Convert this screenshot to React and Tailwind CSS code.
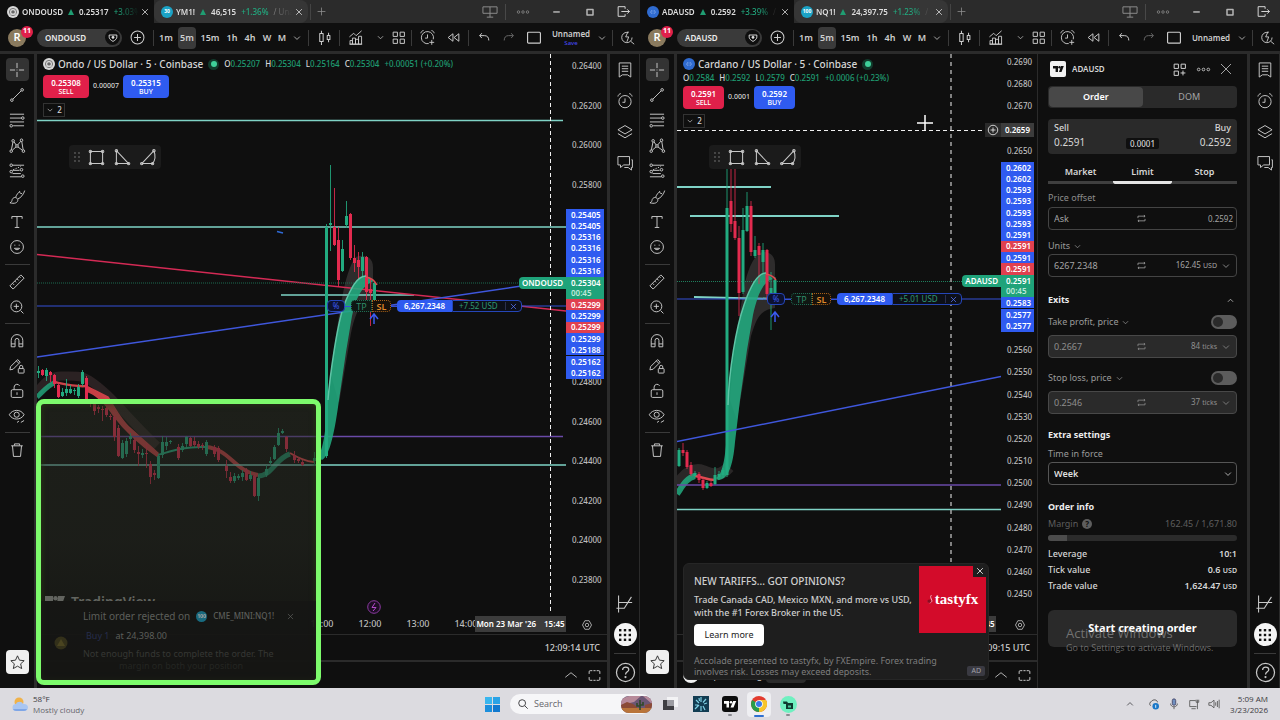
import React from "react";

/* ---------- icons, drawn on a 28 unit grid ---------- */
const ICONS = {
  cross: <path d="M14 3v8M14 17v8M3 14h8M17 14h8M14 13.4v1.2" />,
  line: <><circle cx="6" cy="22" r="2" /><circle cx="22" cy="6" r="2" /><path d="M7.5 20.500 20.500 7.500" /></>,
  fib: <><path d="M3 5h22M3 11h18M3 17h22M8 23h17" /><circle cx="23" cy="11" r="2" /><circle cx="5" cy="23" r="2" /></>,
  pattern: <><circle cx="5" cy="22" r="2" /><circle cx="8" cy="6" r="2" /><circle cx="14" cy="14" r="2" /><circle cx="21" cy="5" r="2" /><circle cx="24" cy="22" r="2" /><path d="M5.300 20 7.700 8M9.300 7.500l3.500 5M19.800 6.600l-4.700 5.800M21.400 7l2.200 13M6.500 20.700l6-5.300M15.500 15.500l7 5.200" /></>,
  forecast: <><path d="M7 5h18M7 13h11M7 18h13M3 23h18" /><path d="m8 12 12-5" strokeDasharray="2 2" /><circle cx="5" cy="5" r="2" /><circle cx="5" cy="15" r="2" /><circle cx="21" cy="12" r="2" /><circle cx="23" cy="22" r="2" /></>,
  brush: <path d="M3 23c3-1 3-3 3.500-5 1-3 5-4.500 7.500-2s1 6-2 7.200c-2.500 1-6 .6-9-.2zM12 14c1.500-4 4-6.500 6-8.500M15.500 17c4-1.500 9-7 10.500-13M18 5c0 3 1.500 4 4 3.500" />,
  text: <path d="M6 9V5.500h16V9M14 5.500v17M10.500 22.500h7" />,
  smile: <><circle cx="14" cy="14" r="10" /><path d="M10 16c1 3 7 3 8 0z" /><path d="M10.500 10.500v1M17.500 10.500v1" strokeWidth="2" /></>,
  ruler: <path d="m3 20 17-17 5 5L8 25zM7 16l2.500 2.500M10.500 12.500l2 2M14 9l2.500 2.500M17.500 5.500l2 2" />,
  zoom: <><circle cx="13" cy="13" r="8.500" /><path d="M13 9v8M9 13h8M19.500 19.500 24 24" /></>,
  magnet: <path d="M5 23V13a9 9 0 0 1 18 0v10h-6V13a3 3 0 0 0-6 0v10zM5 18.500h6M17 18.500h6" />,
  penlock: <><path d="m3 20 1-5L15 4l4 4L8 19zM13 6l4 4" /><rect x="16" y="18" width="9" height="7" rx="1" /><path d="M18 18v-2.500a2.500 2.500 0 0 1 5 0V18" /></>,
  lock: <><rect x="5" y="12" width="18" height="12" rx="2" /><path d="M9.500 12V8a4.500 4.500 0 0 1 8.500-2M14 16v4" /></>,
  eye: <><path d="M2 12c5-9 18-9 23 0-5 9-18 9-23 0z" /><circle cx="13.500" cy="12" r="4" /><path d="m14 24 3-2M20 24l5-3" /></>,
  trash: <path d="M5 7.500h18M10 7V4.500h8V7M7 7.500 8.500 24h11L21 7.500" />,
  star: <path d="m14 3 3.300 7.200 7.700.8-5.800 5.200 1.700 7.800-6.900-4-6.900 4 1.700-7.800L3 11l7.700-.8z" />,
  notes: <path d="M5 3h18v22l-5-3.500h-8L5 25zM9 8h10M9 12h10M9 16h10" />,
  alarm: <><circle cx="14" cy="15" r="9.500" /><path d="M14 10v6h-4M3 7c.5-2.500 2-4 4.500-4.500M25 7c-.5-2.500-2-4-4.500-4.500" /></>,
  layers: <path d="m14 4 11 6.500L14 17 3 10.500zM3 16.500 14 23l11-6.500" />,
  chat: <path d="M3 4h18v13h-9l-5 4v-4H3zM24 9h1.500v12H24v4l-5-4h-6" />,
  signal: <path d="M5 2v24M5 12h19M5 20h8L23 4M2 20h3" />,
  help: <><circle cx="14" cy="14" r="11" /><path d="M10.500 11c0-5 7.500-4.500 7.500-.5 0 2.500-4 3-4 6" /><circle cx="14" cy="19.500" r=".6" /></>,
  plusCircle: <><circle cx="14" cy="14" r="9.500" /><path d="M14 9v10M9 14h10" /></>,
  chevron: <path d="m6 10 8 8 8-8" strokeWidth="2.200" />,
  chevronUp: <path d="m6 18 8-8 8 8" strokeWidth="2.200" />,
  wideUp: <path d="m4 18 10-8 10 8" />,
  candles: <path d="M7 8h5v12H7zM9.500 4v4M9.500 20v5M18 11h4v6h-4zM20 7v4M20 17v4" />,
  indicators: <path d="M5 25v-6h4v6zM9 25V15h5v10zM14 25v-8h5v8zM19 25V12h5v13zM4 25h21M4 13l7-6 4 4 9-8" />,
  grid: <path d="M4 4h8v8H4zM17 4h8v8h-8zM4 17h8v8H4zM17 17h8v8h-8z" strokeWidth="1.800" />,
  gridPlus: <path d="M4 4h8v8H4zM17 4h8v8h-8zM4 17h8v8H4zM20.500 16v9M16 20.500h9" strokeWidth="1.800" />,
  alarmPlus: <><path d="M16 24a10 10 0 1 1 7.500-7M14 9v6h-4M3 7c.5-2.500 2-4 4.500-4.500M25 7c-.5-2.500-2-4-4.500-4.500M21 18v8M17 22h8" /></>,
  replay: <path d="M13 7v14l-9-7zM24 7v14l-9-7z" strokeWidth="1.800" />,
  undo: <path d="M9 6 5 10.500 9 15M5 10.500h9c5 0 8 3 8 9" strokeWidth="1.800" />,
  redo: <path d="m19 6 4 4.500L19 15M23 10.500h-9c-5 0-8 3-8 9" strokeWidth="1.800" />,
  layout: <rect x="4" y="5" width="20" height="17" rx="1.500" strokeWidth="1.800" />,
  quick: <><circle cx="13" cy="14" r="8.500" strokeDasharray="42 12" /><path d="m15 4-4 9h5l-3 8M19 20l6 5" /></>,
  close: <path d="m6 6 16 16M22 6 6 22" strokeWidth="2.200" />,
  closeThin: <path d="m4 4 20 20M24 4 4 24" />,
  panel: <path d="M3 6h22v10H3zM14 6v16M9 22h10" />,
  dots: <><circle cx="5" cy="14" r="2.500" /><circle cx="14" cy="14" r="2.500" /><circle cx="23" cy="14" r="2.500" /></>,
  min: <path d="M7 15h14" strokeWidth="2.500" />,
  max: <rect x="8" y="9" width="12" height="11" strokeWidth="3" />,
  exit: <path d="M17 9V5H4v18h13v-4M10 14h15M21 10l4 4-4 4" strokeWidth="1.800" />,
  plus: <path d="M14 4v20M4 14h20" strokeWidth="2" />,
  full: <path d="M4 11V7a2 2 0 0 1 2-2h4M18 5h4a2 2 0 0 1 2 2v4M24 17v4a2 2 0 0 1-2 2h-4M10 23H6a2 2 0 0 1-2-2v-4M12 5h4M12 23h4" strokeWidth="1.800" />,
  hex: <><path d="M9 4h10l5.500 10L19 24H9L3.500 14z" strokeWidth="2" /><circle cx="14" cy="14" r="4" strokeWidth="2" /></>,
  swap: <path d="M5 13V8h18M20 5l3 3-3 3M23 15v5H5M8 17l-3 3 3 3" strokeWidth="2" />,
  shapeRect: <><path d="M5 5h18v18H5z" /><circle cx="5" cy="5" r="1.800" /><circle cx="23" cy="5" r="1.800" /><circle cx="5" cy="23" r="1.800" /><circle cx="23" cy="23" r="1.800" /></>,
  shapeTri: <><path d="M5 4v19h18z" /><circle cx="5" cy="4" r="1.800" /><circle cx="5" cy="23" r="1.800" /><circle cx="23" cy="23" r="1.800" /></>,
  shapeArc: <><path d="M4 23 22 4c3 8 1 15-2 19z" /><circle cx="4" cy="23" r="1.800" /><circle cx="22" cy="4" r="1.800" /><circle cx="20" cy="23" r="1.800" /></>,
  search: <><circle cx="12" cy="12" r="8" strokeWidth="2.200" /><path d="m18 18 7 7" strokeWidth="2.200" /></>,
  watch: <><path d="M14 22C8 19 5 15 5 12V7h18v5c0 3-3 7-9 10z" strokeWidth="2" /><path d="m14 9 3 3-3 4-3-4z" fill="currentColor" /></>,
};

function Icon({ name, className = "size-[19px]" }) {
  return (
    <svg viewBox="0 0 28 28" className={`shrink-0 ${className}`} fill="none" stroke="currentColor" strokeWidth="1.500" strokeLinejoin="round" aria-hidden="true">
      {ICONS[name]}
    </svg>
  );
}

function IconButton({ name, label, className = "", icon }) {
  return (
    <button type="button" aria-label={label} className={`flex shrink-0 items-center justify-center ${className}`}>
      <Icon name={name} className={icon} />
    </button>
  );
}

const Divider = () => <span className="h-4 w-px shrink-0 bg-[#3a3a3a]" />;

function Coin({ kind, className = "size-3" }) {
  if (kind === "ondo")
    return (
      <svg viewBox="0 0 12 12" className={`shrink-0 ${className}`} aria-hidden="true">
        <circle cx="6" cy="6" r="6" fill="#d8d8d8" />
        <circle cx="6" cy="6" r="3.600" fill="none" stroke="#777" strokeWidth="1" />
        <circle cx="6" cy="6" r="1.800" fill="#666" />
        <path d="M2.600 8.200h6.800" stroke="#d8d8d8" strokeWidth=".8" />
      </svg>
    );
  if (kind === "ada")
    return (
      <svg viewBox="0 0 12 12" className={`shrink-0 ${className}`} aria-hidden="true">
        <circle cx="6" cy="6" r="6" fill="#2f6bd0" />
        <g fill="#8fb2ee">
          <circle cx="4.800" cy="4.900" r=".7" /><circle cx="7.200" cy="4.900" r=".7" /><circle cx="4.800" cy="7.100" r=".7" />
          <circle cx="7.200" cy="7.100" r=".7" /><circle cx="3.600" cy="6" r=".6" /><circle cx="8.400" cy="6" r=".6" />
        </g>
      </svg>
    );
  return (
    <span className={`flex shrink-0 items-center justify-center rounded-full bg-[#1ba3c6] text-[5px] leading-none font-bold text-white ${className}`}>{kind}</span>
  );
}

/* ---------- window chrome ---------- */
function Tab({ active, coin, name, price, change, tail }) {
  return (
    <div className={`flex h-[23px] w-[154px] shrink-0 items-center pr-1 pl-[7px] ${active ? "bg-[#0f0f0f]" : "rounded-lg bg-[#363636]"}`}>
      <Coin kind={coin} />
      <a href="#chart" className="ml-[3px] flex min-w-0 flex-1 items-center gap-[5px] overflow-hidden text-[8px] font-semibold whitespace-nowrap text-[#dedede] [mask-image:linear-gradient(to_right,#000_80%,transparent_100%)]">
        <span>{name}</span>
        <svg viewBox="0 0 6 6" className="size-[6px] shrink-0" aria-hidden="true"><path d="M3 0 6 6H0z" fill="#1f9d72" /></svg>
        <span>{price}</span>
        <span className="font-medium text-[#22ab80]">{change}</span>
        <span className="font-normal text-[#8a8a8a]">{tail}</span>
      </a>
      <IconButton name="close" label={`Close ${name}`} icon="size-[10px]" className="w-[11px] text-[#dcdcdc]" />
    </div>
  );
}

function TitleBar({ tabs }) {
  return (
    <header className="flex h-[23px] items-center bg-[#2b2b2b] text-[#8e8e8e]">
      {tabs.map((t) => <Tab key={t.name} {...t} />)}
      <span className="ml-[2px] h-4 w-px bg-[#444]" />
      <IconButton name="plus" label="New tab" icon="size-[11px]" className="w-[21px]" />
      <span className="flex-1" />
      <IconButton name="panel" label="Panels" icon="size-[18px]" className="w-[30px]" />
      <span className="h-4 w-px bg-[#484848]" />
      <IconButton name="dots" label="More" icon="size-[14px]" className="w-[34px]" />
      <IconButton name="min" label="Minimise" icon="size-[13px]" className="w-[33px] text-[#dcdcdc]" />
      <IconButton name="max" label="Maximise" icon="size-[14px]" className="w-[34px] text-[#b5b5b5]" />
      <IconButton name="exit" label="Leave" icon="size-[15px]" className="w-[33px] text-[#dcdcdc]" />
    </header>
  );
}

function Toolbar({ symbol, saved }) {
  const interval = "shrink-0 text-center text-[9px] font-semibold";
  return (
    <div className="flex h-7 items-center overflow-hidden bg-[#0f0f0f] pt-px text-[#cdcdcd]">
      <div className="relative w-[37px] shrink-0 pl-2">
        <button type="button" aria-label="Account" className="flex size-[18px] items-center justify-center rounded-full bg-[#8a7a5e] text-[11px] font-semibold text-white">R</button>
        <span className="absolute -top-[3px] left-[21px] flex size-[12px] items-center justify-center rounded-full bg-[#e0204a] text-[7px] font-bold text-white">11</span>
      </div>
      <button type="button" className="flex h-[18px] w-[85px] shrink-0 items-center justify-between rounded-full bg-[#3a3a3a] pr-[2px] pl-2 text-[8px] font-semibold text-[#ececec]">
        {symbol}
        <span className="flex size-[15px] items-center justify-center rounded-full bg-[#0f0f0f]"><Icon name="watch" className="size-[12px]" /></span>
      </button>
      <IconButton name="plusCircle" label="Compare" className="w-[31px]" />
      <Divider />
      <button type="button" className={`${interval} w-6`}>1m</button>
      <button type="button" aria-pressed="true" className={`${interval} h-[22px] w-[18px] rounded-sm bg-[#3a3a3a]`}>5m</button>
      <button type="button" className={`${interval} w-7`}>15m</button>
      <button type="button" className={`${interval} w-4`}>1h</button>
      <button type="button" className={`${interval} w-5`}>4h</button>
      <button type="button" className={`${interval} w-[14px]`}>W</button>
      <button type="button" className={`${interval} w-4`}>M</button>
      <IconButton name="chevron" label="Intervals" icon="size-[10px]" className="mr-1 w-[14px]" />
      <Divider />
      <IconButton name="candles" label="Chart type" className="w-[30px]" />
      <Divider />
      <IconButton name="indicators" label="Indicators" icon="size-[17px]" className="w-[31px]" />
      <IconButton name="chevron" label="Indicator list" icon="size-[9px]" className="ml-1 w-[11px]" />
      <IconButton name="grid" label="Templates" icon="size-[15px]" className="w-[25px]" />
      <Divider />
      <IconButton name="alarmPlus" label="Alert" icon="size-[17px]" className="w-[30px]" />
      <IconButton name="replay" label="Replay" icon="size-[15px]" className="mr-1 w-[22px]" />
      <Divider />
      <IconButton name="undo" label="Undo" icon="size-[15px]" className="w-[30px]" />
      <IconButton name="redo" label="Redo" icon="size-[15px]" className="w-[18px] text-[#6a6a6a]" />
      <IconButton name="layout" label="Layout" icon="size-[18px]" className="w-[34px]" />
      <button type="button" className="w-10 shrink-0 text-center text-[8px] leading-[11px] font-semibold">
        Unnamed
        {saved ? null : <span className="block text-[6px] leading-[8px] font-medium text-[#4448ee]">Save</span>}
      </button>
      <IconButton name="chevron" label="Layouts" icon="size-[10px]" className="w-[21px]" />
      <Divider />
      <IconButton name="quick" label="Quick search" icon="size-[17px]" className="ml-[6px]" />
    </div>
  );
}

const TOOLS_A = [["cross", "Cross"], ["line", "Trend line"], ["fib", "Fib retracement"], ["pattern", "Patterns"], ["forecast", "Forecast"], ["brush", "Brush"], ["text", "Text"], ["smile", "Icons"]];
const TOOLS_B = [["ruler", "Measure"], ["zoom", "Zoom in"]];
const TOOLS_C = [["magnet", "Magnet"], ["penlock", "Keep drawing"], ["lock", "Lock drawings"], ["eye", "Hide drawings"]];

function ToolRail() {
  const btn = "h-[23px] w-[23px] rounded";
  const line = "my-[5px] h-px w-[25px] bg-[#3a3a3a]";
  return (
    <nav aria-label="Drawing tools" className="flex w-[34px] shrink-0 flex-col items-center pt-1 pb-[14px] text-[#c9c9c9]">
      <div className="flex h-[201px] flex-col justify-between">
        {TOOLS_A.map(([n, l], i) => <IconButton key={n} name={n} label={l} icon="size-[18px]" className={`${btn} ${i === 0 ? "bg-[#333]" : ""}`} />)}
      </div>
      <span className={line} />
      <div className="flex flex-col gap-[2px]">{TOOLS_B.map(([n, l]) => <IconButton key={n} name={n} label={l} icon="size-[18px]" className={btn} />)}</div>
      <span className={line} />
      <div className="flex flex-col gap-[2px]">{TOOLS_C.map(([n, l]) => <IconButton key={n} name={n} label={l} icon="size-[18px]" className={btn} />)}</div>
      <span className={line} />
      <IconButton name="trash" label="Remove" icon="size-[18px]" className={btn} />
      <span className="flex-1" />
      <IconButton name="star" label="Favourites" icon="size-[17px]" className="h-6 w-[23px] rounded bg-[#f0f0f0] text-[#2a2a2a]" />
    </nav>
  );
}

function SideRail() {
  return (
    <nav aria-label="Widgets" className="flex w-[30px] shrink-0 flex-col items-center border-r border-[#2b2b2b] pb-1 pl-px text-[#c9c9c9]">
      {[["notes", "Watchlist"], ["alarm", "Alerts"], ["layers", "Object tree"], ["chat", "Chats"]].map(([n, l]) => (
        <IconButton key={n} name={n} label={l} icon="size-[18px]" className="h-[31px] w-6" />
      ))}
      <span className="flex-1" />
      <IconButton name="signal" label="Trading panel" icon="size-[20px]" className="mb-[9px]" />
      <button type="button" aria-label="Apps" className="flex size-[23px] items-center justify-center rounded-full bg-[#f4f4f4]">
        <svg viewBox="0 0 12 12" className="size-3" fill="#111" aria-hidden="true">
          {[0, 4.800, 9.600].map((y) => [0, 4.800, 9.600].map((x) => <rect key={`${x}-${y}`} x={x} y={y} width="2.400" height="2.400" />))}
        </svg>
      </button>
      <span className="my-[7px] h-px w-[22px] bg-[#3a3a3a]" />
      <IconButton name="help" label="Help" icon="size-[23px]" />
    </nav>
  );
}

/* ---------- chart drawings ---------- */
const G = "#22ab80";
const R = "#e22b4f";

/* x, wick top, body top, body bottom, wick bottom, rising */
function Candles({ data, width = 3 }) {
  return data.map(([x, wt, t, b, wb, up], i) => (
    <g key={i} fill={up ? G : R}>
      <rect x={x - 0.5} y={wt} width="1" height={wb - wt} opacity=".85" />
      <rect x={x - width / 2} y={t} width={width} height={b - t} />
    </g>
  ));
}

const ONDO = [
  [38.5, 366, 371, 373, 378, 1], [42.5, 369, 370, 375, 376, 0], [46.5, 368, 370, 376, 381, 1], [50.5, 371, 372, 375, 382, 0], [54.5, 374, 375, 384, 388, 0], [58.5, 382, 385, 397, 398, 0],
  [62.5, 388, 392, 396, 397, 1], [66.5, 379, 389, 393, 396, 1], [70.5, 385, 389, 393, 394, 1], [74.5, 388, 390, 391, 395, 1], [78.5, 384, 387, 396, 398, 1], [82.5, 370, 372, 384, 386, 1], [86.5, 376, 378, 399, 400, 0],
  [90.5, 399, 402, 404, 407, 0], [94.5, 401, 403, 411, 415, 0], [98.5, 405, 407, 409, 413, 0], [102.5, 406, 409, 410, 421, 0], [106.5, 404, 408, 415, 417, 0], [110.5, 414, 416, 417, 420, 0], [114.5, 415, 417, 437, 441, 0], [118.5, 425, 428, 456, 457, 0],
  [122.5, 440, 443, 458, 459, 1], [126.5, 438, 441, 454, 457, 1], [130.5, 433, 436, 439, 444, 1], [134.5, 438, 440, 450, 453, 0], [138.5, 446, 452, 454, 466, 0], [142.5, 449, 453, 455, 458, 1], [146.5, 444, 453, 454, 468, 0], [150.5, 461, 464, 477, 484, 0],
  [154.5, 470, 473, 475, 480, 0], [158.5, 455, 456, 478, 479, 1], [162.5, 436, 442, 455, 458, 1], [166.5, 437, 442, 446, 450, 1], [170.5, 440, 441, 442, 444, 1], [178.5, 444, 447, 458, 460, 0], [182.5, 443, 446, 450, 452, 1], [186.5, 436, 437, 444, 448, 1],
  [190.5, 437, 438, 446, 447, 0], [194.5, 437, 441, 445, 447, 0], [198.5, 441, 444, 447, 449, 0], [202.5, 443, 445, 446, 450, 0], [206.5, 440, 442, 454, 456, 1], [214.5, 445, 447, 454, 457, 0], [218.5, 446, 448, 460, 462, 0], [226.5, 460, 466, 471, 478, 0],
  [230.5, 472, 477, 481, 483, 0], [234.5, 473, 476, 481, 483, 1], [238.5, 474, 476, 478, 480, 1], [242.5, 470, 473, 477, 481, 1], [246.5, 468, 470, 480, 481, 0], [250.5, 471, 475, 479, 481, 1], [254.5, 474, 476, 496, 497, 0], [258.5, 475, 478, 496, 501, 1],
  [266.5, 465, 469, 475, 477, 1], [270.5, 457, 461, 463, 466, 1], [274.5, 445, 447, 459, 460, 1], [278.5, 428, 433, 445, 446, 1], [282.5, 429, 431, 433, 434, 1], [286.5, 436, 437, 449, 452, 0], [294.5, 451, 455, 460, 463, 0], [298.5, 457, 459, 461, 463, 0],
  [302.5, 460, 462, 465, 466, 0], [314.5, 452, 458, 461, 466, 1],
];
const ONDO_RISE = [
  [326.5, 224, 227, 456, 458, 1], [330.5, 165, 223, 225, 251, 1], [334.5, 188, 227, 245, 246, 0], [338.5, 227, 240, 280, 287, 0], [342.5, 240, 249, 271, 272, 1], [346.5, 201, 216, 225, 228, 1], [350.5, 213, 214, 258, 260, 0],
  [354.5, 245, 258, 263, 272, 0], [358.5, 252, 260, 267, 280, 0], [362.5, 252, 257, 271, 276, 1], [366.5, 256, 257, 292, 300, 0], [370.5, 278, 289, 293, 326, 0], [374.5, 281, 283, 300, 301, 1],
];
const ADA = [
  [679, 448, 450, 466, 467, 1], [683, 443, 450, 453, 456, 0], [687, 450, 452, 467, 469, 0], [691, 462, 465, 474, 476, 0], [695, 471, 473, 476, 478, 1], [699, 472, 474, 480, 483, 0], [703, 478, 480, 488, 490, 0], [707, 481, 483, 488, 489, 1], [711, 481, 483, 486, 487, 0],
  [715, 467, 475, 484, 485, 1], [719, 471, 474, 477, 480, 1], [723, 468, 470, 475, 478, 1],
  [727, 169, 208, 475, 477, 1], [731, 169, 201, 224, 232, 0], [735, 169, 221, 238, 240, 0], [739, 226, 238, 293, 316, 0], [743, 208, 230, 292, 294, 1], [747, 192, 206, 231, 232, 1], [751, 201, 206, 252, 256, 0],
  [755, 236, 250, 256, 258, 1], [759, 243, 246, 255, 284, 0], [763, 243, 250, 262, 273, 1], [767, 249, 250, 294, 300, 0], [771, 272, 288, 300, 330, 1], [775, 277, 280, 300, 302, 1],
];

const UpArrow = ({ x, y }) => <path d={`M${x} ${y + 10}V${y}m-4 5 4-5 4 5`} fill="none" stroke="#3b5bf0" strokeWidth="1.500" />;

function OndoDrawing() {
  return (
    <svg className="absolute inset-0 size-full" aria-label="ONDOUSD candles">
      <g transform="translate(-37 -54)" fill="none">
        <path d="M331 375C338 320 344 270 356 257c7-3 17-1 17 10v34c-10 0-16 5-22 32l-12 70z" fill="#2e2c2c" />
        <path d="M37 392c8-10 14-16 24-16s20-1 28 4c22 14 38 38 68 66" stroke="#2b2223" strokeWidth="9" />
        <path d="M37 397c6-5 10-11 17-14" stroke={G} strokeWidth="5" opacity=".8" />
        <path d="M54 382c10 2 22 5 32 4" stroke="#e04a50" strokeWidth="2.500" opacity=".9" />
        <path d="M86 386 108 397C116 410 122 422 130 428L158 453V457C142 446 126 432 114 416 106 404 96 394 86 391z" fill="#e8484f" stroke="#e8484f" strokeWidth="1.500" opacity=".85" />
        <path d="M158 455c14-4 26-9 48-8" stroke={G} strokeWidth="2" />
        <path d="M206 447c24 2 28 24 52 28" stroke="#e8484f" strokeWidth="4" opacity=".85" />
        <path d="M258 476c14 0 18-18 32-22" stroke={G} strokeWidth="5" opacity=".8" />
        <path d="M290 453c8 5 14 8 24 9" stroke="#e8484f" strokeWidth="2" />
        <path d="M37 120.500h526M37 227h529M37 465h529M281 295h133" stroke="#7fd3c6" strokeWidth="1.500" />
        <path d="M37 254.500 566 311" stroke="#d42a55" strokeWidth="1.500" />
        <path d="M37 283h488" stroke="#1c6b50" strokeDasharray="1 1" />
        <path d="M37 306h529" stroke="#3550d8" />
        <path d="M37 357 528 285" stroke="#3f57dc" strokeWidth="1.500" />
        <path d="M37 436.500h526" stroke="#6a4aa8" strokeWidth="1.500" />
        <path d="M277 231.500l6 1.500" stroke="#2f6bd8" strokeWidth="1.500" />
        <Candles data={ONDO} />
        <path d="M318 457C323 450 326 430 328 400 330 375 337 325 344 305 351 288 357 276 366 276L374 281C362 285 356 298 352 316L346 352 339 400C335 430 330 456 322 460z" fill={G} opacity=".88" />
        <Candles data={ONDO_RISE} />
        <path d="M328 400C330 375 337 325 344 305 351 288 357 276 366 276" stroke="#5fc4a6" strokeWidth="1.500" />
        <path d="M366 277c6 1 9 4 11 8" stroke="#e04a50" strokeWidth="1.500" />
        <path d="M550.500 54v560" stroke="#f0f0f0" strokeDasharray="4 3" />
        <UpArrow x={374} y={314} />
      </g>
    </svg>
  );
}

function AdaDrawing() {
  return (
    <svg className="absolute inset-0 size-full" aria-label="ADAUSD candles">
      <g transform="translate(-677 -54)" fill="none">
        <path d="M730 400c4-50 10-90 14-112 4-22 12-36 20-36 6 0 11 4 11 12v44c-14 2-18 8-24 28l-14 84z" fill="#2e2c2c" />
        <path d="M677 486c8-14 18-18 26-15 12 5 18 5 26-4" stroke="#2a2727" strokeWidth="12" />
        <path d="M677 494c5-7 9-16 18-18" stroke={G} strokeWidth="6" opacity=".85" />
        <path d="M695 476c8 1 12 4 20 4" stroke="#e04a50" strokeWidth="2.500" />
        <path d="M677 187h94M690 216h149M694 297l86 2" stroke="#7fd3c6" strokeWidth="2" />
        <path d="M677 509.500h324" stroke="#7fd3c6" strokeWidth="1.500" />
        <path d="M677 281.500h304" stroke="#1f7f5e" strokeDasharray="1 1" />
        <path d="M677 299h324" stroke="#3550d8" />
        <path d="M677 485h324" stroke="#6a4aa8" strokeWidth="1.500" />
        <path d="M716 478C724 474 727 450 728 405 729 370 736 328 744 305 750 287 757 273 766 273L773 279C762 282 757 297 753 315L747 350 740 400 735 442C733 466 728 480 718 480z" fill={G} opacity=".88" />
        <Candles data={ADA} />
        <path d="M728 405C729 370 736 328 744 305 750 287 757 273 766 273" stroke="#5fc4a6" strokeWidth="1.500" />
        <path d="M766 274c5 1 8 3 10 6" stroke="#e04a50" strokeWidth="1.500" />
        <path d="M677 441.500 1001 376.500" stroke="#3f57dc" strokeWidth="1.500" />
        <path d="M951 54v560" stroke="#a8a8a8" strokeWidth="1.500" strokeDasharray="4 4" />
        <path d="M677 130.500h312" stroke="#f0f0f0" strokeDasharray="4 3" />
        <path d="M925 115v16M917 123h16" stroke="#fff" strokeWidth="1.500" />
        <UpArrow x={775} y={312} />
      </g>
    </svg>
  );
}

/* ---------- chart parts ---------- */
function Tag({ tone, children }) {
  const bg = tone === "r" ? "bg-[#e0404f]" : "bg-[#2f5bf0]";
  return <span className={`flex flex-1 items-center ${bg}`}>{children}</span>;
}

function PriceAxis({ first, step, gap, offset, decimals, count, hide, symbol, above, now, below, last, top, width, marker }) {
  const labels = Array.from({ length: count }, (_, i) => ({ text: (first - i * step).toFixed(decimals), y: offset + i * gap })).filter((l) => !hide.includes(l.text));
  return (
    <div className={`relative shrink-0 text-[8px] font-medium text-[#bdbdbd] ${width}`}>
      {labels.map((l) => (
        <span key={l.text} className="absolute left-[6px] -translate-y-1/2 leading-none" style={{ top: l.y }}>{l.text}</span>
      ))}
      <div className={`absolute right-[3px] left-0 flex h-[170px] flex-col leading-none font-semibold text-white [&>span]:pl-[5px] ${top}`}>
        {above.map(([t, v], i) => <Tag key={i} tone={t}>{v}</Tag>)}
        <span className="relative flex flex-[2] flex-col justify-evenly bg-[#1fa37a]">
          <b className="absolute top-0 right-full flex h-3 items-center rounded-l-sm bg-[#1fa37a] px-[3px] text-[8px] font-semibold">{symbol}</b>
          <span>{now}</span>
          <span className="text-[#bfe8da]">00:45</span>
        </span>
        {below.map(([t, v], i) => <Tag key={i} tone={t}>{v}</Tag>)}
        <span className="h-px" />
        {last.map(([t, v], i) => <Tag key={i} tone={t}>{v}</Tag>)}
      </div>
      {marker && (
        <span className="absolute top-[69px] right-[3px] flex h-[14px] items-center bg-[#3c3c3c] leading-none font-semibold text-white">
          <span className="mr-1 flex h-full items-center bg-[#2a2a2a] px-px"><Icon name="plusCircle" className="size-[14px]" /></span>
          <span className="pr-1">{marker}</span>
        </span>
      )}
    </div>
  );
}

function OrderLine({ qty, pnl, className }) {
  return (
    <div className={`absolute flex h-3 items-center text-[8px] leading-none ${className}`}>
      <button type="button" aria-label="Reverse" className="h-full w-[18px] rounded-sm border border-[#2546b8] bg-[#0d1230] text-[#3b5bf0]">%</button>
      <span className="h-px w-[6px] bg-[#3550d8]" />
      <button type="button" className="h-full w-[21px] rounded-l-sm border border-dotted border-[#1f6b52] bg-[#0f1613] text-[9px] text-[#2f8a68]">TP</button>
      <button type="button" className="h-full w-[19px] rounded-r-sm border border-dotted border-[#a8611a] bg-[#17110a] text-[9px] font-semibold text-[#e08a2a]">SL</button>
      <span className="h-px w-[6px] bg-[#3550d8]" />
      <span className="flex h-full w-[55px] items-center justify-center rounded-l-sm bg-[#2f5bf0] font-semibold text-white">{qty}</span>
      <span className="flex h-full w-[70px] items-center justify-between rounded-r-sm border border-[#2546b8] bg-[#0d0f18] pr-[3px] pl-[6px] text-[#2f9a72]">
        {pnl}
        <span className="ml-1 h-2 w-px bg-[#2a2f50]" />
        <IconButton name="close" label="Close position" icon="size-[9px]" className="text-[#5a78ff]" />
      </span>
    </div>
  );
}

function FloatingShapes() {
  return (
    <div className="absolute top-[91px] left-8 flex h-6 w-[92px] items-center gap-[7px] rounded bg-[#1b1b1b] pl-[5px] text-[#c9c9c9]">
      <svg viewBox="0 0 6 10" className="h-[10px] w-[6px]" fill="#5a5a5a" aria-hidden="true">
        {[1, 5, 9].map((y) => [1, 5].map((x) => <circle key={`${x}${y}`} cx={x} cy={y} r=".9" />))}
      </svg>
      <IconButton name="shapeRect" label="Rectangle" icon="size-[19px]" />
      <IconButton name="shapeTri" label="Triangle" icon="size-[19px]" />
      <IconButton name="shapeArc" label="Arc" icon="size-[19px]" />
    </div>
  );
}

function Ohlc({ items, change }) {
  return (
    <div className="flex gap-[5px] text-[8px] font-medium whitespace-nowrap text-[#1f9d72]">
      {items.map(([k, v]) => <span key={k}><span className="text-[#d6d6d6]">{k}</span>{v}</span>)}
      <span>{change}</span>
    </div>
  );
}

function Legend({ coin, title, ohlc, inline, sell, spread, buy }) {
  const trade = "flex h-[23px] flex-col items-center justify-center rounded text-[8px] leading-[9px] font-semibold text-white";
  const w = inline ? "w-[46px]" : "w-[41px]";
  return (
    <div className="absolute top-[2px] left-[6px] flex flex-col items-start">
      <div className="flex h-4 items-center">
        <Coin kind={coin} />
        <h2 className="ml-[3px] text-[10px] font-medium whitespace-nowrap text-[#d6d6d6]">{title}</h2>
        <span className="mx-[5px] flex size-[11px] items-center justify-center rounded-full bg-[#123c2d]"><span className="size-[6px] rounded-full bg-[#3fd09a]" /></span>
        {inline && <Ohlc {...ohlc} />}
      </div>
      {!inline && <Ohlc {...ohlc} />}
      <div className={`flex items-center gap-[3px] ${inline ? "mt-[3px]" : "mt-[2px]"}`}>
        <button type="button" className={`${trade} ${w} bg-[#e0204a]`}><span>{sell}</span><span className="text-[7px] font-medium">SELL</span></button>
        <span className="px-px text-[7px] font-medium text-[#d6d6d6]">{spread}</span>
        <button type="button" className={`${trade} ${w} bg-[#2f5bf0]`}><span>{buy}</span><span className="text-[7px] font-medium">BUY</span></button>
      </div>
      <button type="button" aria-label="2 indicators" className="mt-[5px] flex h-[14px] w-[22px] items-center justify-center gap-[3px] border border-[#333] text-[8px] font-medium text-[#d6d6d6]">
        <Icon name="chevron" className="size-2" />2
      </button>
    </div>
  );
}

function ChartFooter({ clock, ticks, tagClass, settingsClass }) {
  return (
    <>
      <div className="relative h-5 shrink-0 overflow-hidden text-[9px] font-medium text-[#bdbdbd]">
        {ticks.map(([t, x]) => <span key={t} className="absolute top-[5px] -translate-x-1/2 leading-none" style={{ left: x }}>{t}</span>)}
        <span className={`absolute top-[2px] flex h-4 items-center justify-center gap-2 bg-[#3c3c3c] text-[8px] font-semibold whitespace-nowrap text-white ${tagClass}`}>
          <span>Mon 23 Mar '26</span><span>15:45</span>
        </span>
        <IconButton name="hex" label="Axis settings" icon="size-3" className={`absolute top-[5px] ${settingsClass}`} />
      </div>
      <div className="flex h-[26px] shrink-0 items-center justify-end border-t border-[#2b2b2b] pr-[7px] text-[9px] font-medium text-[#cdcdcd]">{clock}</div>
      <div className="h-[2px] shrink-0 bg-[#2b2b2b]" />
      <div className="flex h-[26px] shrink-0 items-center justify-end gap-2 pr-[5px] text-[#cdcdcd]">
        <IconButton name="wideUp" label="Open panel" icon="size-4" />
        <IconButton name="full" label="Maximise panel" icon="size-[15px]" />
      </div>
    </>
  );
}

function Toast() {
  return (
    <div className="absolute -left-px bottom-[3px] flex h-[286px] w-[285px] flex-col overflow-hidden rounded-lg border-[5px] border-[#7dfb6c] bg-linear-to-b from-[#2b2f24]/50 via-[#262921]/55 to-[#141512]/95 shadow-[inset_0_0_6px_#2a3a12]">
      <div className="flex-1" />
      <div className="ml-1 flex h-[5px] items-start gap-[6px] overflow-hidden text-[#62645f]">
        <svg viewBox="0 0 20 14" className="h-[14px] w-5 shrink-0" fill="currentColor" aria-hidden="true"><path d="M0 0h8v14H4V5H0zM13 0h7l-5 14h-4z" /><circle cx="10.500" cy="2.300" r="2.200" /></svg>
        <span className="text-[14px] leading-[12px] font-semibold">TradingView</span>
      </div>
      <div role="alert" className="flex h-[79px] bg-[#151614]/70 pt-[9px] pl-[10px] text-[#5c5e5a]">
        <svg viewBox="0 0 14 14" className="mt-[26px] ml-[3px] size-[14px] shrink-0" aria-hidden="true"><circle cx="7" cy="7" r="6.500" fill="#33301a" /><path d="m7 3 4 7H3z" fill="#4a4420" /></svg>
        <div className="ml-[15px] min-w-0 flex-1">
          <p className="flex items-center text-[10px] leading-3 whitespace-nowrap">Limit order rejected on
            <Coin kind="100" className="mx-[6px] size-[11px] opacity-60" />
            <span className="text-[8px] font-medium">CME_MINI:NQ1!</span>
            <IconButton name="close" label="Dismiss" icon="size-[9px]" className="ml-3" />
          </p>
          <p className="mt-2 text-[9px] leading-3"><span className="mr-[6px] ml-[3px] text-[#252d4c]">Buy 1</span>at 24,398.00</p>
          <p className="mt-[6px] text-[9px] leading-3 whitespace-nowrap text-[#353733]">Not enough funds to complete the order. The</p>
          <p className="pl-9 text-[9px] leading-3 whitespace-nowrap text-[#242522]">margin on both your position</p>
        </div>
      </div>
    </div>
  );
}

function AdCard() {
  return (
    <aside className="absolute bottom-2 left-[6px] h-[117px] w-[306px] rounded-md border border-[#262626] bg-[#1e1e1e] pt-[11px] pl-[10px] text-[#cfcfcf]">
      <h3 className="text-[10px] leading-3 font-medium">NEW TARIFFS... GOT OPINIONS?</h3>
      <p className="mt-[6px] text-[9px] leading-[13px] font-medium">Trade Canada CAD, Mexico MXN, and more vs USD,<br />with the #1 Forex Broker in the US.</p>
      <a href="#offer" className="mt-[5px] flex h-[22px] w-[70px] items-center justify-center rounded bg-white text-[9px] text-[#222]">Learn more</a>
      <p className="mt-[9px] text-[9px] leading-[11px] text-[#7d7d7d]">Accolade presented to tastyfx, by FXEmpire. Forex trading<br />involves risk. Losses may exceed deposits.</p>
      <div className="absolute top-[2px] right-[2px] flex h-[67px] w-[67px] items-center justify-center gap-px bg-[#d30b2a] text-white">
        <svg viewBox="0 0 8 12" className="h-[11px] w-[7px]" fill="none" aria-hidden="true"><path d="M5 1C3 3 5 5 5.500 7c.6 2.600-3.400 4-4.300 1" stroke="#f6c7cf" /><circle cx="2.500" cy="8" r="2" fill="#8d0a20" /></svg>
        <span className="font-[Liberation_Serif,serif] text-[15px] font-bold">tastyfx</span>
      </div>
      <IconButton name="close" label="Close ad" icon="size-[10px]" className="absolute top-0 right-[2px] size-[13px] bg-[#1e1e1e] text-white" />
      <span className="absolute right-[3px] bottom-[3px] flex h-[10px] items-center rounded-xs bg-[#3a3a42] px-1 text-[7px] text-[#a0a0a8]">AD</span>
    </aside>
  );
}

/* ---------- order panel ---------- */
function Field({ id, value, right, unit, disabled, caret = true }) {
  return (
    <div className={`flex h-[23px] items-center rounded border text-[9px] ${caret ? "px-[5px]" : "pr-[3px] pl-[5px]"} ${disabled ? "border-[#484848] bg-[#2a2a2a] text-[#8e8e8e]" : "border-[#444] text-[#a4a4a4]"}`}>
      <input id={id} defaultValue={value} disabled={disabled} className="w-[82px] min-w-0 bg-transparent outline-none" />
      <Icon name="swap" className="size-[11px]" />
      <span className="ml-auto text-[8px]">{right} {unit && <span className="text-[7px]">{unit}</span>}</span>
      {caret && <Icon name="chevron" className="ml-1 size-[10px]" />}
    </div>
  );
}

function Exit({ id, label, value, ticks }) {
  return (
    <>
      <div className="mb-[5px] flex h-4 items-center justify-between">
        <label htmlFor={id} className="flex items-center gap-[3px] text-[9px] text-[#9a9a9a]">{label}<Icon name="chevron" className="size-[9px]" /></label>
        <input type="checkbox" role="switch" aria-label={`${label} enabled`} className="flex h-[14px] w-[26px] appearance-none items-center rounded-full bg-[#5c5c5c] pl-[2px] before:size-[10px] before:rounded-full before:bg-[#2a2a2a]" />
      </div>
      <Field id={id} value={value} right={ticks} unit="ticks" disabled />
    </>
  );
}

function OrderPanel() {
  return (
    <section aria-label="Order ticket" className="flex w-[210px] shrink-0 flex-col border-l border-[#2b2b2b] px-[10px] text-[9px] text-[#d6d6d6]">
      <div className="mt-[7px] flex h-4 items-center">
        <svg viewBox="0 0 16 16" className="mr-[6px] ml-[2px] size-4" aria-hidden="true"><rect width="16" height="16" rx="2" fill="#f2f2f2" /><path d="M3 5h5v6H5.600V7.500H3zM11 5h2.800l-2.300 6H9z" fill="#111" /><circle cx="9.500" cy="6.200" r="1.200" fill="#111" /></svg>
        <h2 className="flex-1 text-[8px] font-semibold">ADAUSD</h2>
        <IconButton name="gridPlus" label="Add widget" icon="size-[15px]" className="mr-[9px]" />
        <IconButton name="dots" label="More" icon="size-[15px]" className="mr-2" />
        <IconButton name="closeThin" label="Close panel" icon="size-[14px]" className="mr-1" />
      </div>
      <div className="mt-[9px] grid h-[22px] grid-cols-2 rounded bg-[#2a2a2a] p-px">
        <button type="button" className="rounded bg-[#484848] font-semibold text-white">Order</button>
        <button type="button" className="text-[#a4a4a4]">DOM</button>
      </div>
      <div className="mt-[11px] flex h-[35px] items-end justify-between rounded bg-[#2a2a2a] px-[6px] pb-[5px] text-[10px] leading-[14px]">
        <button type="button" className="text-left"><span className="block text-[9px] font-medium">Sell</span>0.2591</button>
        <span className="rounded-xs bg-[#0f0f0f] px-1 text-[8px] leading-[11px] font-medium">0.0001</span>
        <button type="button" className="text-right"><span className="block text-[9px] font-medium">Buy</span>0.2592</button>
      </div>
      <div role="tablist" className="mt-[9px] grid h-[21px] grid-cols-[65px_59px_1fr] font-semibold">
        {["Market", "Limit", "Stop"].map((t, i) => (
          <button key={t} type="button" role="tab" aria-selected={i === 1} className={`border-b-[3px] pb-px ${i === 1 ? "rounded-b-xs border-[#e4e4e4]" : "border-[#3f3f3f]"}`}>{t}</button>
        ))}
      </div>
      <label htmlFor="offset" className="mt-[6px] mb-px leading-4 text-[#8c8c8c]">Price offset</label>
      <Field id="offset" value="Ask" right="0.2592" caret={false} />
      <label htmlFor="units" className="mt-[8px] flex items-center gap-[3px] leading-4 text-[#9a9a9a]">Units <Icon name="chevron" className="size-[9px]" /></label>
      <Field id="units" value="6267.2348" right="162.45" unit="USD" />
      <div className="mt-[15px] mb-[6px] flex h-4 items-center justify-between pr-[1px]">
        <h3 className="font-bold text-[#ececec]">Exits</h3>
        <IconButton name="chevronUp" label="Collapse exits" icon="size-[9px]" className="mr-px" />
      </div>
      <Exit id="tp" label="Take profit, price" value="0.2667" ticks="84" />
      <div className="h-3" />
      <Exit id="sl" label="Stop loss, price" value="0.2546" ticks="37" />
      <h3 className="mt-[13px] leading-4 font-bold text-[#ececec]">Extra settings</h3>
      <label htmlFor="tif" className="mt-[3px] leading-4 text-[#9a9a9a]">Time in force</label>
      <div className="relative">
        <select id="tif" defaultValue="Week" className="h-[23px] w-full appearance-none rounded border border-[#555] bg-[#0f0f0f] px-[5px] font-semibold text-[#dedede]"><option>Week</option></select>
        <Icon name="chevron" className="pointer-events-none absolute top-[7px] right-1 size-[10px]" />
      </div>
      <h3 className="mt-[14px] leading-4 font-bold text-[#ececec]">Order info</h3>
      <div className="mt-px flex h-4 items-center justify-between text-[#5e5e5e]">
        <span className="flex items-center gap-1">Margin <span className="flex size-[10px] items-center justify-center rounded-full bg-[#5e5e5e] text-[8px] font-bold text-[#0f0f0f]">?</span></span>
        <span>162.45 / 1,671.80</span>
      </div>
      <div className="mt-[3px] mb-[5px] h-[6px] shrink-0 overflow-hidden rounded-sm bg-[#2b2b2b]"><div className="h-full w-[10%] bg-[#4c4c4c]" /></div>
      <dl className="font-semibold">
        {[["Leverage", "10:1", ""], ["Tick value", "0.6", "USD"], ["Trade value", "1,624.47", "USD"]].map(([k, v, u]) => (
          <div key={k} className="flex h-4 items-center justify-between"><dt className="font-medium">{k}</dt><dd>{v} {u && <span className="text-[7px]">{u}</span>}</dd></div>
        ))}
      </dl>
      <div className="relative mt-4">
        <button type="button" className="h-[37px] w-full rounded-md bg-[#2a2a2a] text-[11px] font-bold text-white">Start creating order</button>
        <div className="pointer-events-none absolute top-4 left-[18px] font-[Open_Sans,sans-serif] whitespace-nowrap text-[#8a8a8a]/75">
          <p className="text-[13px] leading-[15px]">Activate Windows</p>
          <p className="text-[9px] leading-[14px]">Go to Settings to activate Windows.</p>
        </div>
      </div>
    </section>
  );
}

/* ---------- windows ---------- */
function TradingWindow({ tabs, symbol, saved, children }) {
  return (
    <section className="flex min-w-0 flex-1 flex-col overflow-hidden">
      <TitleBar tabs={tabs} />
      <Toolbar symbol={symbol} saved={saved} />
      <div className="h-[3px] shrink-0 bg-[#2b2b2b]" />
      <div className="flex min-h-0 flex-1">
        <ToolRail />
        <div className="w-[3px] shrink-0 bg-[#2b2b2b]" />
        {children}
        <div className="w-[3px] shrink-0 bg-[#2b2b2b]" />
        <SideRail />
      </div>
    </section>
  );
}

function Taskbar() {
  return (
    <footer className="relative flex h-8 shrink-0 items-center justify-between bg-[#dcdbe0] px-3 font-[Open_Sans,sans-serif] text-[#3a3a3e]">
      <button type="button" className="flex items-center gap-1 text-left text-[8px] leading-[11px]">
        <svg viewBox="0 0 17 17" className="size-[17px]" aria-hidden="true"><circle cx="7" cy="6" r="4.500" fill="#f0b24a" /><path d="M4 15a3.500 3.500 0 0 1 0-7c1-3 6-3 7 0 3-.5 5 1 5 3.500S14 15 12 15z" fill="#a9c6f2" /><path d="M4 15a3.500 3.500 0 0 1-3-2h14c-.6 1.300-1.600 2-3 2z" fill="#7fa6e6" /></svg>
        <span><span className="block">58°F</span><span className="block text-[#66666c]">Mostly cloudy</span></span>
      </button>
      <div className="absolute left-1/2 flex -translate-x-[155px] items-center">
        <button type="button" aria-label="Start"><svg viewBox="0 0 15 15" className="size-[15px]" aria-hidden="true"><path d="M0 0h7v7H0z" fill="#39b6ee" /><path d="M8 0h7v7H8z" fill="#2aa3e6" /><path d="M0 8h7v7H0z" fill="#1c8fdc" /><path d="M8 8h7v7H8z" fill="#1279cf" /></svg></button>
        <div className="ml-[10px] flex h-5 w-[142px] items-center rounded-full bg-[#f6f6f8] pl-[7px]">
          <Icon name="search" className="size-3" />
          <input aria-label="Search" placeholder="Search" className="ml-[5px] w-20 bg-transparent text-[9px] placeholder:text-[#66666c]" />
          <svg viewBox="0 0 31 17" className="ml-auto h-[17px] w-[31px]" aria-hidden="true">
            <clipPath id="pill"><rect width="31" height="17" rx="8" /></clipPath>
            <g clipPath="url(#pill)"><path fill="#6c5674" d="M0 0h31v17H0z" /><path d="m0 3 8-3h12l-7 6-13 3zM22 0h9v8z" fill="#b78a9a" /><path d="M0 9l6-3 6 2 4 3v3H0zM24 9l7-2v6h-7z" fill="#8b4a36" /><path d="M0 12h31v5H0z" fill="#b9743a" /><path d="M19 14V4M16 7v3h3M22 6v3h-3" stroke="#2f4a2a" strokeWidth="1.600" fill="none" /></g>
          </svg>
        </div>
        <button type="button" aria-label="Task view" className="ml-[11px]"><svg viewBox="0 0 15 14" className="h-[14px] w-[15px]" aria-hidden="true"><path d="M4 0h11v10H4z" fill="#f3f3f5" /><path d="M0 3h11v10H0z" fill="#3e3e42" /><path d="M4 3h7v6H4z" fill="#9c9ca2" /></svg></button>
        <button type="button" aria-label="Trading tools" className="ml-[15px]"><svg viewBox="0 0 16 16" className="size-4" aria-hidden="true"><path fill="#123c52" d="M0 0h16v16H0z" /><path d="M8 1v5M8 10v5M3 4l3 3M13 3l-3 3.500M2 13l4-4M6 2l.5 3M12 14l-2-4M2 9h3M11 8l3-1" stroke="#7fd0e4" strokeWidth="1.200" /></svg></button>
        <button type="button" aria-label="TradingView" className="relative ml-[13px]"><svg viewBox="0 0 16 16" className="size-4" aria-hidden="true"><rect width="16" height="16" rx="3" fill="#0c0c0c" /><path d="M2 5h5v6.500H4.500V7.700H2zM11.200 5h3l-2.700 6.500h-3z" fill="#fff" /><circle cx="9" cy="6.300" r="1.300" fill="#fff" /></svg>
          <span className="absolute -bottom-1 left-[6px] h-[2px] w-1 rounded-full bg-[#8a8a90]" /></button>
        <button type="button" aria-label="Chrome" className="relative ml-[9px] flex h-[25px] w-6 items-center justify-center rounded-sm bg-[#efeff2]">
          <svg viewBox="0 0 16 16" className="size-4" aria-hidden="true"><circle cx="8" cy="8" r="8" fill="#e33b2e" /><path d="M8 8 1.100 4A8 8 0 0 0 8 16l3.500-6z" fill="#2a9d4a" /><path d="M8 8h0l0 8a8 8 0 0 0 7-12H8z" fill="#f7c52b" /><circle cx="8" cy="8" r="3.800" fill="#fff" /><circle cx="8" cy="8" r="3" fill="#3a78e7" /></svg>
          <span className="absolute bottom-0 h-[2px] w-[10px] rounded-full bg-[#2f6fd0]" />
        </button>
        <button type="button" aria-label="Wallet" className="relative ml-[9px]"><svg viewBox="0 0 17 17" className="size-[17px]" aria-hidden="true"><circle cx="8.500" cy="8.500" r="8.500" fill="#6ff0c0" /><path d="M3 5.500h4l1 1.500h5v6H6V8H3.500z" fill="#0f3a30" /><path d="M8 9.500h3v2H8z" fill="#49c79a" /></svg>
          <span className="absolute -bottom-[3px] left-[6px] h-[2px] w-1 rounded-full bg-[#8a8a90]" /></button>
      </div>
      <div className="flex items-center gap-2">
        <IconButton name="chevronUp" label="Hidden icons" icon="size-[10px]" className="mr-[5px]" />
        <svg viewBox="0 0 14 14" className="size-3" fill="none" stroke="#444" aria-hidden="true"><path d="M3 9a3 3 0 0 1 1-5c2-3 7-2 7 1" /><circle cx="9" cy="9.500" r="3.800" fill="#1a78c8" stroke="none" /><path d="M9 8v3.500" stroke="#fff" /></svg>
        <svg viewBox="0 0 14 14" className="size-3" fill="none" stroke="#555" aria-hidden="true"><rect x="5" y="1" width="4" height="7.500" rx="2" fill="#7090c0" stroke="#446" /><path d="M3 6.500c0 5 8 5 8 0M7 10.500V13" /></svg>
        <svg viewBox="0 0 14 14" className="size-3" fill="none" stroke="#555" aria-hidden="true"><path d="M9 3H2v7h8M4 12.500h5M11 2v11M9.500 2v3h3V2" /></svg>
        <svg viewBox="0 0 14 14" className="size-3" fill="none" stroke="#555" aria-hidden="true"><path d="M1 5.500h2.500L7 2.500v9L3.500 8.500H1zM9 5v4M11 3.500v7M13 2v10" /></svg>
        <p className="w-10 text-right text-[8px] leading-[11px]">5:09 AM<br />3/23/2026</p>
      </div>
    </footer>
  );
}

const times = (v, n, t = "b") => Array.from({ length: n }, () => [t, v]);

export default function App() {
  return (
    <div className="flex h-screen flex-col overflow-hidden bg-[#0f0f0f] font-[Noto_Sans,sans-serif]">
      <main className="flex min-h-0 flex-1 bg-[#0f0f0f]">
        <TradingWindow
          symbol="ONDOUSD"
          tabs={[
            { active: true, coin: "ondo", name: "ONDOUSD", price: "0.25317", change: "+3.03%", tail: "" },
            { coin: "30", name: "YM1!", price: "46,515", change: "+1.36%", tail: "/ Una" },
          ]}
        >
          <div className="relative flex min-w-0 flex-1 flex-col">
            <div className="flex min-h-0 flex-1">
              <div className="relative min-w-0 flex-1 overflow-hidden">
                <OndoDrawing />
                <Legend coin="ondo" inline title="Ondo / US Dollar · 5 · Coinbase" sell="0.25308" spread="0.00007" buy="0.25315"
                  ohlc={{ items: [["O", "0.25207"], ["H", "0.25304"], ["L", "0.25164"], ["C", "0.25304"]], change: "+0.00051 (+0.20%)" }} />
                <FloatingShapes />
                <OrderLine qty="6,267.2348" pnl="+7.52 USD" className="top-[246px] left-[290px]" />
                <svg viewBox="0 0 14 14" className="absolute bottom-0 left-[330px] size-[14px]" aria-hidden="true"><circle cx="7" cy="7" r="6.300" fill="#1d0d24" stroke="#8a3aa0" /><path d="M8 3 5 7.500h4L6 11" fill="none" stroke="#b34acb" /></svg>
              </div>
              <PriceAxis first={0.264} step={0.002} gap={39.5} offset={12} decimals={5} count={14} width="w-[41px]" symbol="ONDOUSD" now="0.25304" top="top-[155px]"
                hide={["0.25600", "0.25400", "0.25200", "0.25000"]}
                above={[...times("0.25405", 2), ...times("0.25316", 4)]}
                below={[["r", "0.25299"], ["b", "0.25299"], ["r", "0.25299"], ["b", "0.25299"], ["b", "0.25188"]]}
                last={times("0.25162", 2)} />
            </div>
            <ChartFooter clock="12:09:14 UTC" ticks={[["11:00", 285], ["12:00", 333], ["13:00", 381], ["14:00", 429]]} tagClass="right-[41px] w-[91px]" settingsClass="right-[14px]" />
            <Toast />
          </div>
        </TradingWindow>

        <TradingWindow
          symbol="ADAUSD"
          saved
          tabs={[
            { active: true, coin: "ada", name: "ADAUSD", price: "0.2592", change: "+3.39%", tail: "/" },
            { coin: "100", name: "NQ1!", price: "24,397.75", change: "+1.23%", tail: "/" },
          ]}
        >
          <div className="relative flex min-w-0 flex-1 flex-col">
            <div className="flex min-h-0 flex-1">
              <div className="relative min-w-0 flex-1 overflow-hidden">
                <AdaDrawing />
                <Legend coin="ada" title="Cardano / US Dollar · 5 · Coinbase" sell="0.2591" spread="0.0001" buy="0.2592"
                  ohlc={{ items: [["O", "0.2584"], ["H", "0.2592"], ["L", "0.2579"], ["C", "0.2591"]], change: "+0.0006 (+0.23%)" }} />
                <FloatingShapes />
                <OrderLine qty="6,267.2348" pnl="+5.01 USD" className="top-[239px] left-[90px]" />
              </div>
              <PriceAxis first={0.269} step={0.001} gap={22.17} offset={8} decimals={4} count={25} width="w-[36px]" symbol="ADAUSD" now="0.2591" top="top-[108px]" marker="0.2659"
                hide={["0.2660", "0.2640", "0.2630", "0.2620", "0.2610", "0.2600", "0.2590", "0.2580", "0.2570"]}
                above={[...times("0.2602", 2), ...times("0.2593", 4), ["b", "0.2591"], ["r", "0.2591"], ["b", "0.2591"], ["r", "0.2591"]]}
                below={[["b", "0.2583"]]}
                last={times("0.2577", 2)} />
            </div>
            <ChartFooter clock="12:09:15 UTC" ticks={[]} tagClass="right-[41px] w-[91px]" settingsClass="right-[11px]" />
            <div className="absolute bottom-[5px] left-[6px] flex items-end gap-1 text-[9px] text-[#cdcdcd]">
              <span className="size-4 rounded-full bg-[#f0f0f0]" />
              <span className="leading-[14px]">Paper Trading</span>
              <span className="h-3 w-10 rounded bg-[#2b2b2b]" />
            </div>
            <AdCard />
          </div>
          <OrderPanel />
        </TradingWindow>
      </main>
      <Taskbar />
    </div>
  );
}
